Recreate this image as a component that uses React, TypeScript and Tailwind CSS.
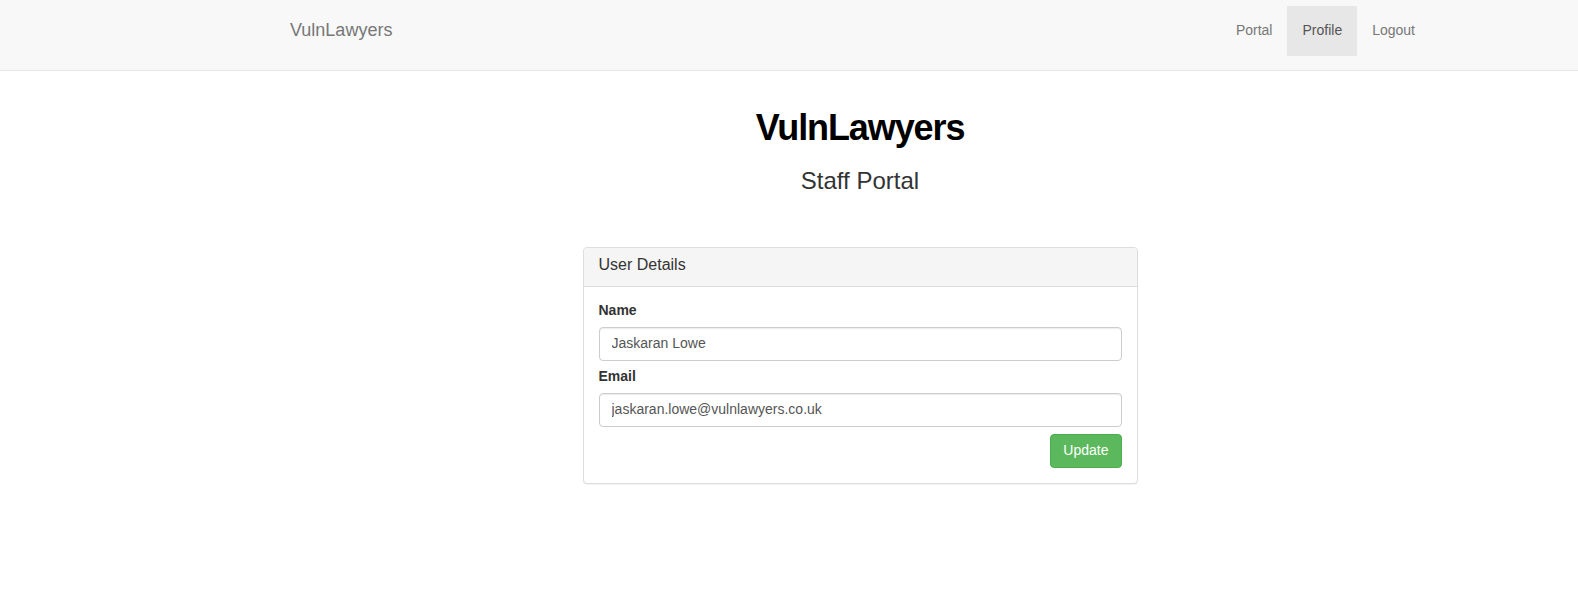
import React from "react";

const navLinks = [
  { label: "Portal", active: false },
  { label: "Profile", active: true },
  { label: "Logout", active: false },
];

const Field = ({
  label,
  value,
  last,
}: {
  label: string;
  value: string;
  last?: boolean;
}) => (
  <div className={last ? "" : "mb-[5px]"}>
    <label className="block mb-[7px] text-[14px] leading-[20px] font-bold text-[#333]">
      {label}
    </label>
    <input
      type="text"
      defaultValue={value}
      className="block w-full h-[34px] px-[12px] pb-[3px] text-[14px] text-[#555] bg-white border border-[#ccc] rounded-[4px] shadow-[inset_0_1px_1px_rgba(0,0,0,0.075)] outline-none"
    />
  </div>
);

export default function App() {
  return (
    <div className="min-h-[603px] bg-white font-['Liberation_Sans',Arial,sans-serif] text-[#333]">
      {/* navbar */}
      <nav className="h-[71px] bg-[#f8f8f8] border-b border-[#e7e7e7]">
        <div className="w-[1170px] ml-[275px] px-[15px] pt-[6px] flex justify-between items-start">
          <a className="block pt-[14px] pb-[16px] text-[18px] leading-[20px] text-[#777]">
            VulnLawyers
          </a>
          <ul className="flex">
            {navLinks.map((l) => (
              <li key={l.label}>
                <a
                  className={
                    "block px-[15px] pt-[14px] pb-[16px] text-[14px] leading-[20px] " +
                    (l.active ? "bg-[#e7e7e7] text-[#555]" : "text-[#777]")
                  }
                >
                  {l.label}
                </a>
              </li>
            ))}
          </ul>
        </div>
      </nav>

      <div className="w-[1170px] ml-[275px] px-[15px]">
        <div className="text-center">
          <h1 className="mt-[37px] text-[36px] leading-[40px] font-bold text-black tracking-[-1.1px]">
            VulnLawyers
          </h1>
          <p className="mt-[20px] text-[24px] leading-[26px] text-[#333]">
            Staff Portal
          </p>
        </div>

        <div className="flex justify-center mt-[53px]">
          <div className="w-[555px] bg-white border border-[#ddd] rounded-[4px] shadow-[0_1px_1px_rgba(0,0,0,0.05)]">
            <div className="px-[15px] pt-[7px] pb-[11px] bg-[#f5f5f5] border-b border-[#ddd] rounded-t-[3px]">
              <h3 className="text-[16px] leading-[20px] text-[#333]">
                User Details
              </h3>
            </div>
            <form className="px-[15px] pt-[13px] pb-[15px]">
              <Field label="Name" value="Jaskaran Lowe" />
              <Field
                label="Email"
                value="jaskaran.lowe@vulnlawyers.co.uk"
                last
              />
              <div className="flex justify-end mt-[7px]">
                <button
                  type="button"
                  className="h-[34px] px-[12px] pb-[3px] text-[14px] leading-[20px] text-white bg-[#5cb85c] border border-[#4cae4c] rounded-[4px]"
                >
                  Update
                </button>
              </div>
            </form>
          </div>
        </div>
      </div>
    </div>
  );
}
